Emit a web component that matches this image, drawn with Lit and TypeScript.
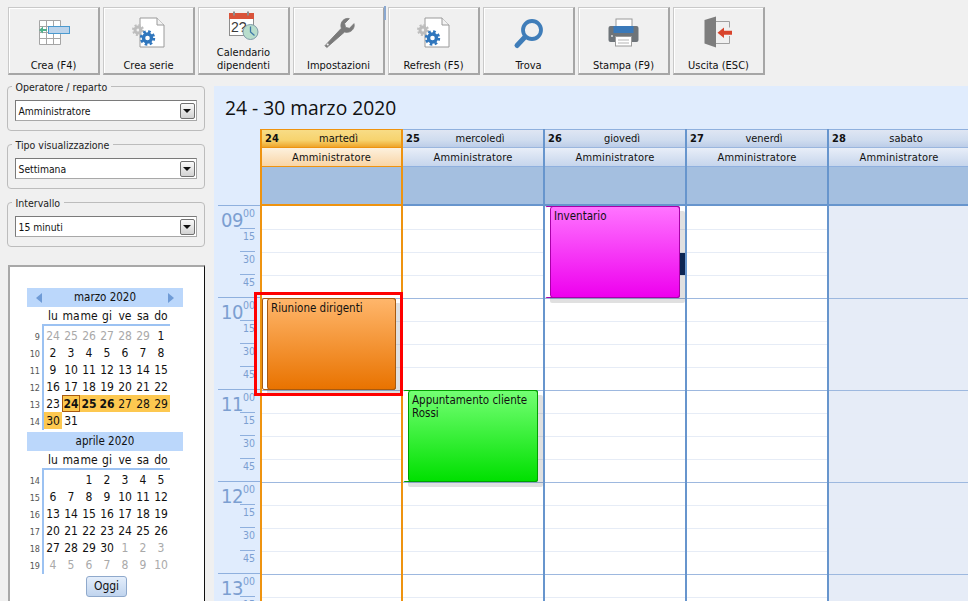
import { LitElement, html, css, svg } from "lit";
import { customElement } from "lit/decorators.js";

const gears = svg`
  <path d="M11 8h17l7 7v22H11z" fill="#fff" stroke="#9a9a9a"/>
  <path d="M28 8v7h7" fill="#f2f2f2" stroke="#9a9a9a"/>
  <g fill="none" stroke="#bdbdbd">
    <circle cx="9" cy="20" r="3" stroke-width="3"/>
    <circle cx="9" cy="20" r="5" stroke-width="2" stroke-dasharray="2 1.9"/>
  </g>
  <g fill="none" stroke="#2f76bd">
    <circle cx="18.5" cy="28" r="4" stroke-width="3.4"/>
    <circle cx="18.5" cy="28" r="6.4" stroke-width="2.6" stroke-dasharray="2.6 2.4"/>
  </g>`;

const ICONS: Record<string, unknown> = {
  crea: svg`
    <path d="M5.5 10.500h21v24h-21zM5.5 16.500h21M5.5 22.500h21M5.5 28.500h21M12.500 10.500v24M19.500 10.500v24" fill="#fff" stroke="#a5a5a5"/>
    <rect x="14.500" y="16.500" width="21" height="7" fill="#bcd3ea" stroke="#4a9ad0"/>
    <path d="M5 20l4-3.500v2.400h4v2.200H9v2.400z" fill="#52b08c"/>`,
  serie: gears,
  calendario: svg`
    <rect x="5.500" y="3.500" width="24" height="22" fill="#fff" stroke="#8d8d8d"/>
    <rect x="5" y="3" width="25" height="6" fill="#d9533a"/>
    <path d="M10 1.500v4M24 1.500v4" stroke="#8d8d8d" stroke-width="2"/>
    <text x="7" y="22" font-family="'Liberation Sans',sans-serif" font-size="14" fill="#3a3a3a">2?</text>
    <circle cx="26.500" cy="22" r="7.500" fill="#b8ddcc" stroke="#7f9aa8"/>
    <path d="M26.500 16.500V22l4 3.500" fill="none" stroke="#3f78a8" stroke-width="1.300"/>`,
  impostazioni: svg`
    <g transform="translate(.6 3.75) scale(.9)">
      <path d="M8 37.500l-2-2 18.200-19.400c-1.400-4 .2-8.400 4-10.200 1.600-.7 3.200-.9 4.800-.5l-5.200 5.400 1 4.400 4.400 1 5-5.200c.4 1.800.2 3.600-.6 5.200-1.800 3.600-6 5.200-9.800 4z" fill="#7a7a7a" stroke="#7a7a7a" stroke-width="1"/>
      <circle cx="9" cy="34.200" r="1.200" fill="#f0f0f0"/>
    </g>`,
  refresh: gears,
  trova: svg`
    <circle cx="23" cy="20" r="9" fill="none" stroke="#3f7db9" stroke-width="3.800"/>
    <path d="M15.500 27.500L8 35.500" stroke="#3f7db9" stroke-width="5" stroke-linecap="round"/>`,
  stampa: svg`
    <rect x="12" y="9" width="16" height="8" fill="#fff" stroke="#9a9a9a"/>
    <rect x="4.500" y="16" width="30" height="16" rx="2" fill="#6e7479"/>
    <rect x="9.500" y="16" width="20" height="7" fill="#3a79b9"/>
    <rect x="11.500" y="26.500" width="16" height="9.500" fill="#fff" stroke="#9a9a9a"/>
    <path d="M14 30h11M14 33h11" stroke="#b5b5b5"/>
    <circle cx="8" cy="26" r="1" fill="#ddd"/>`,
  uscita: svg`
    <path d="M17 11.500h13.500v6M30.500 26v7.500H17" fill="none" stroke="#a0a0a0"/>
    <path d="M5.500 10L17 6.500v31L5.500 33.500z" fill="#7d7d7d"/>
    <path d="M18.500 22.700l6.500-5.200v3.200h8v4h-8v3.200z" fill="#d8432b"/>`,
};

const TOOLS = [
  { id: "crea", label: ["Crea (F4)"] },
  { id: "serie", label: ["Crea serie"] },
  { id: "calendario", label: ["Calendario", "dipendenti"] },
  { id: "impostazioni", label: ["Impostazioni"] },
  { id: "refresh", label: ["Refresh (F5)"] },
  { id: "trova", label: ["Trova"] },
  { id: "stampa", label: ["Stampa (F9)"] },
  { id: "uscita", label: ["Uscita (ESC)"] },
];

const GROUPS = [
  ["Operatore / reparto", "Amministratore"],
  ["Tipo visualizzazione", "Settimana"],
  ["Intervallo", "15 minuti"],
];

const WEEK = ["lu", "ma", "me", "gi", "ve", "sa", "do"];
type Cell = { n: number | ""; dim?: boolean; on?: boolean; bold?: boolean; today?: boolean };
const seq = (a: number, b: number, o: Partial<Cell> = {}): Cell[] =>
  Array.from({ length: b - a + 1 }, (_, i) => ({ n: a + i, ...o }));

const MARCH: Cell[] = [
  ...seq(24, 29, { dim: true }), ...seq(1, 22),
  { n: 23 },
  { n: 24, on: true, bold: true, today: true },
  { n: 25, on: true, bold: true },
  { n: 26, on: true, bold: true },
  ...seq(27, 29, { on: true }),
  { n: 30, on: true }, { n: 31 },
  ...Array.from({ length: 5 }, () => ({ n: "" as const })),
];
const APRIL: Cell[] = [
  { n: "" }, { n: "" }, ...seq(1, 30), ...seq(1, 10, { dim: true }),
];

const DAYS = [
  { n: 24, name: "martedì", cur: true },
  { n: 25, name: "mercoledì" },
  { n: 26, name: "giovedì" },
  { n: 27, name: "venerdì" },
  { n: 28, name: "sabato", off: true },
];
const HOURS = ["09", "10", "11", "12", "13"];

@customElement("app-root")
export class AppRoot extends LitElement {
  static styles = css`
    :host { display: block; }
    * { box-sizing: border-box; }
    .app {
      width: 968px; height: 601px; overflow: hidden; background: #f0f0f0;
      display: flex; flex-direction: column;
      font-family: "DejaVu Sans", "Open Sans", sans-serif; font-stretch: condensed; color: #111;
    }
    .toolbar { height: 86px; flex: none; display: flex; gap: 3px; padding: 7px 0 0 8px; position: relative; }
    .tick { position: absolute; left: 384px; top: 6px; width: 1.500px; height: 14px; background: #8aa8d0; }
    .tool {
      width: 92px; height: 68px; flex: none; background: #f0f0f0;
      border: 1px solid #c9c9c9; border-right: 2px solid #a6a6a6; border-bottom: 2px solid #a6a6a6;
      box-shadow: inset 1px 1px 0 #fff;
      display: flex; flex-direction: column; align-items: center; position: relative;
      font-size: 11px; line-height: 13px; text-align: center; color: #111;
    }
    .tool svg { position: absolute; left: 25px; top: 2px; width: 40px; height: 40px; }
    .tool .lbl { margin-top: auto; padding-bottom: 1px; }
    .body { flex: 1; display: flex; min-height: 0; }
    .left { width: 214px; flex: none; padding-left: 6.500px; display: flex; flex-direction: column; }
    .group {
      width: 198px; height: 45px; flex: none; margin-bottom: 13px; position: relative;
      border: 1px solid #bcbcbc; border-radius: 4px; padding: 13px 7px 0 7px;
    }
    .legend {
      position: absolute; left: 4px; top: -7px; background: #f0f0f0; padding: 0 4px;
      font-size: 10.500px; line-height: 14px; color: #222;
    }
    .select {
      height: 21px; background: #fff; border: 1px solid #8a8a8a; border-color: #7a7a7a #a8a8a8 #a8a8a8 #7a7a7a;
      display: flex; align-items: center; justify-content: space-between; padding: 0 1px 0 3px;
      font-size: 10.300px;
    }
    .drop {
      width: 15px; height: 16px; border: 1px solid #707070; border-radius: 2px;
      background: linear-gradient(#fafafa, #d2d2d2);
      display: flex; align-items: center; justify-content: center;
    }
    .drop i { width: 0; height: 0; border: 4px solid transparent; border-top: 4px solid #111; border-bottom: 0; }
    .cal {
      flex: 1; margin: 5px 0 0 1.500px; width: 197px; background: #fff; position: relative;
      border-top: 2px solid #a8a8a8; border-left: 2px solid #a8a8a8; border-right: 1.500px solid #111;
      padding: 21px 0 0 17px; font-size: 12px; line-height: 17px;
    }
    .mhead {
      width: 156px; height: 19px; background: #bbd7fb; display: flex; align-items: center;
      justify-content: space-between; padding: 0 9px; font-size: 11.500px;
    }
    .mhead span { flex: 1; text-align: center; }
    .arrow { width: 0; height: 0; border: 5px solid transparent; }
    .arrow.l { border-right: 6px solid #6f9bd6; border-left: 0; }
    .arrow.r { border-left: 6px solid #6f9bd6; border-right: 0; }
    .wk { display: grid; grid-template-columns: repeat(7, 18px); margin-left: 17px; height: 18px; line-height: 18px; text-align: center; }
    .monthbody { display: flex; }
    .nums { width: 15px; font-size: 9px; color: #555; text-align: right; padding: 3px 2px 0 0; }
    .nums div { height: 17px; line-height: 18px; }
    .dates {
      display: grid; grid-template-columns: repeat(7, 18px); grid-auto-rows: 17px;
      border-left: 2px solid #9cc2f2; border-top: 2px solid #9cc2f2; margin-top: -1px; padding-top: 1px;
      width: 128px; text-align: center;
    }
    .d { line-height: 19px; }
    .d.dim { color: #a9a9a9; }
    .d.on { background: #fdc850; }
    .d.bold { font-weight: 700; }
    .d.today { border: 1px solid #a85a10; line-height: 17px; }
    .month2 { margin-top: 2px; }
    .oggi-row { width: 156px; display: flex; justify-content: center; margin-top: 2px; padding-left: 3px; }
    .oggi {
      width: 41px; height: 21px; border: 1px solid #8fa9cc; border-radius: 3px;
      background: linear-gradient(#e4eefb, #c0d4ee); display: flex; align-items: center; justify-content: center;
      font-size: 12px;
    }
    .main { flex: 1; background: #e0ecfd; min-width: 0; display: flex; flex-direction: column; }
    .title { height: 43px; flex: none; padding-left: 11px; font-family: "Open Sans", sans-serif; font-stretch: normal; font-size: 19.250px; line-height: 44px; color: #111; }
    .heads { display: flex; height: 77px; flex: none; }
    .spacer { width: 46px; flex: none; }
    .hcol {
      width: 142px; flex: none; display: flex; flex-direction: column; font-size: 11px;
      border-right: 2px solid #6795cd; border-bottom: 2px solid #6795cd; background: #a4bfe0;
    }
    .hcol.cur { border-color: #ee9310; width: 143px; border-left: 2px solid #ee9310; }
    .dayrow {
      height: 19px; border-top: 1px solid #8fb0de; display: flex; align-items: center; padding: 0 3px 1px 17px; position: relative;
      background: linear-gradient(#dfe6f3, #cfdcef 60%, #bccde8); justify-content: center; border-bottom: 1px solid #9ab6de;
    }
    .dayrow b { position: absolute; left: 3px; font-size: 11px; }
    .cur .dayrow { background: linear-gradient(#f8dc86, #f7d36e 60%, #eea52a); border-top-color: #ee9310; border-bottom-color: #ee9310; }
    .oprow {
      height: 19px; text-align: center; line-height: 19px; border-bottom: 1px solid #8fb0de; letter-spacing: 0.150px;
      background: linear-gradient(#e8eef8, #c6d5ec);
    }
    .cur .oprow { background: linear-gradient(#fdf1de, #f9d5a6); border-bottom-color: #ee9310; }
    .grid { flex: 1; display: flex; min-height: 0; position: relative; }
    .gutter { width: 46px; flex: none; margin-top: -1px; }
    .hour {
      height: 92px; margin-left: 4px; border-top: 1px solid #8fb0de; color: #7c9fd1; position: relative;
      display: grid; grid-template-columns: 22px 15px; grid-template-rows: 22px 23px 23px 23px;
    }
    .hour .big { grid-row: 1 / span 4; font-size: 20px; line-height: 28px; padding-left: 3px; letter-spacing: -0.500px; }
    .hour .m { font-size: 10.500px; line-height: 15px; text-align: right; grid-column: 2; border-top: 1px solid #8fb0de; height: 23px; color: #7c9fd1; }
    .hour .m.first { border-top: 0; line-height: 15px; height: 22px; }
    .col { width: 142px; flex: none; position: relative; background: #fff; border-right: 2px solid #6795cd; padding-top: 1px; }
    .col.cur { width: 143px; border-right-color: #ee9310; border-left: 2px solid #ee9310; }
    .col.off { background: #e6ecf7; }
    .slot { height: 23px; border-bottom: 1px solid #e6ecf6; }
    .slot.end { border-bottom-color: #9db8df; }
    .ev {
      position: absolute; height: 92px; background: #fff; border: 1px solid var(--b); border-radius: 2px;
      box-shadow: 5px 5px 0 rgba(0,0,0,0.12);
    }
    .ev .fill {
      position: absolute; left: 4px; top: -1px; right: -1px; bottom: -1px; border: 1px solid var(--b); border-radius: 3px;
      font-size: 11.500px; line-height: 13px; padding: 3px 3px 0 3px; color: #111;
    }
    .orange { --b: #a85a10; }
    .orange .fill { background: linear-gradient(#ffb66b, #e97300); }
    .pink { --b: #a800a8; border-left-color: #fff; }
    .pink .fill { background: linear-gradient(#ff74ff, #ee00ee); }
    .green { --b: #00a000; border-left-color: #fff; }
    .green .fill { background: linear-gradient(#73ff73, #00e000); }
    .navy { position: absolute; left: 135px; top: 47px; width: 5px; height: 22px; background: #0e2b5e; }
    .sel { position: absolute; left: 40px; top: 86px; width: 149px; height: 104px; border: 3px solid #f00; pointer-events: none; z-index: 3; }
  `;

  private month(name: string, nums: number[], cells: Cell[], arrows: boolean) {
    return html`
      <div class="mhead">
        ${arrows ? html`<i class="arrow l"></i>` : ""}<span>${name}</span>${arrows ? html`<i class="arrow r"></i>` : ""}
      </div>
      <div class="wk">${WEEK.map((w) => html`<div>${w}</div>`)}</div>
      <div class="monthbody">
        <div class="nums">${nums.map((n) => html`<div>${n}</div>`)}</div>
        <div class="dates">
          ${cells.map((c) => html`<div class="d ${c.dim ? "dim" : ""} ${c.on ? "on" : ""} ${c.bold ? "bold" : ""} ${c.today ? "today" : ""}">${c.n}</div>`)}
        </div>
      </div>`;
  }

  render() {
    return html`
      <div class="app">
        <div class="toolbar">
          ${TOOLS.map((t) => html`
            <div class="tool">
              <svg viewBox="0 0 40 40">${ICONS[t.id]}</svg>
              <div class="lbl">${t.label.map((l) => html`<div>${l}</div>`)}</div>
            </div>`)}
          <div class="tick"></div>
        </div>
        <div class="body">
          <div class="left">
            ${GROUPS.map(([g, v]) => html`
              <div class="group">
                <div class="legend">${g}</div>
                <div class="select"><span>${v}</span><div class="drop"><i></i></div></div>
              </div>`)}
            <div class="cal">
              ${this.month("marzo 2020", [9, 10, 11, 12, 13, 14], MARCH, true)}
              <div class="month2">${this.month("aprile 2020", [14, 15, 16, 17, 18, 19], APRIL, false)}</div>
              <div class="oggi-row"><div class="oggi">Oggi</div></div>
            </div>
          </div>
          <div class="main">
            <div class="title">24 - 30 marzo 2020</div>
            <div class="heads">
              <div class="spacer"></div>
              ${DAYS.map((d) => html`
                <div class="hcol ${d.cur ? "cur" : ""}">
                  <div class="dayrow"><b>${d.n}</b><span>${d.name}</span></div>
                  <div class="oprow">Amministratore</div>
                </div>`)}
            </div>
            <div class="grid">
              <div class="gutter">
                ${HOURS.map((h) => html`
                  <div class="hour">
                    <div class="big">${h}</div>
                    <div class="m first">00</div><div class="m">15</div><div class="m">30</div><div class="m">45</div>
                  </div>`)}
              </div>
              ${DAYS.map((d, i) => html`
                <div class="col ${d.cur ? "cur" : ""} ${d.off ? "off" : ""}">
                  ${Array.from({ length: 20 }, (_, k) => html`<div class="slot ${k % 4 === 3 ? "end" : ""}"></div>`)}
                  ${i === 0 ? html`<div class="ev orange" style="left:0;width:134px;top:92px"><div class="fill">Riunione dirigenti</div></div>` : ""}
                  ${i === 1 ? html`<div class="ev green" style="left:0;width:135px;top:184px"><div class="fill">Appuntamento cliente Rossi</div></div>` : ""}
                  ${i === 2 ? html`<div class="navy"></div><div class="ev pink" style="left:0;width:135px;top:0"><div class="fill">Inventario</div></div>` : ""}
                </div>`)}
              <div class="sel"></div>
            </div>
          </div>
        </div>
      </div>`;
  }
}
